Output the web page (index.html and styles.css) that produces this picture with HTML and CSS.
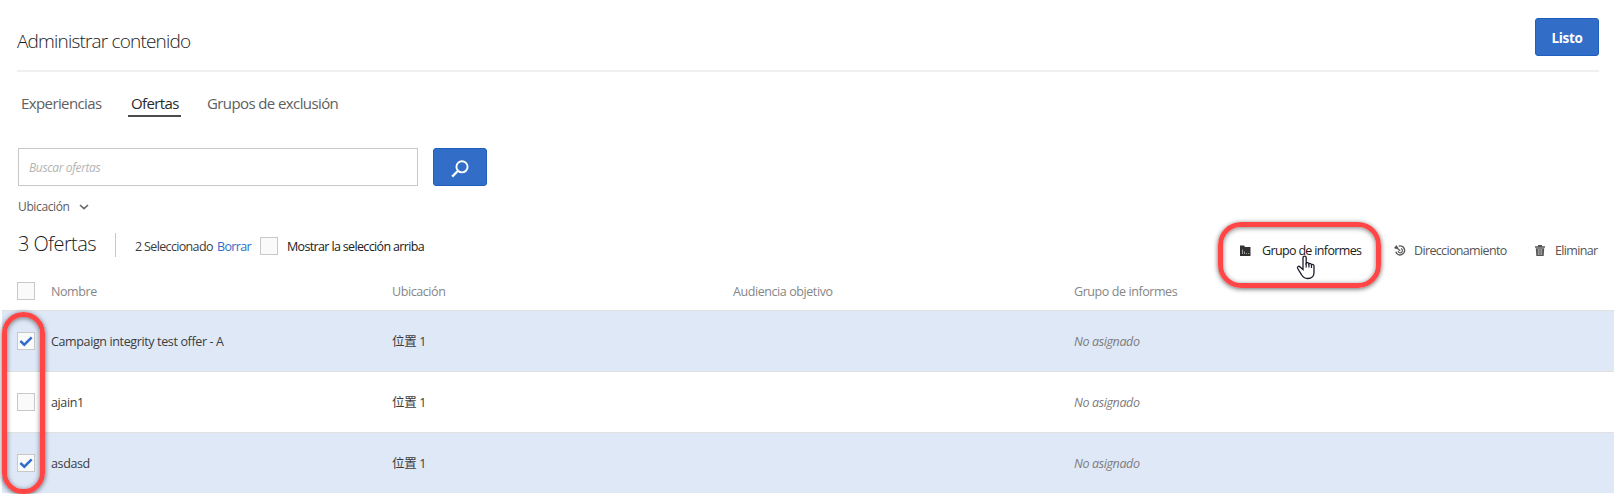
FILE: index.html
```html
<!DOCTYPE html>
<html lang="es">
<head>
<meta charset="utf-8">
<title>Administrar contenido</title>
<link rel="stylesheet" href="styles.css">
</head>
<body>
<header class="header">
  <h1 class="title">Administrar contenido</h1>
  <button class="btn done">Listo</button>
</header>
<nav class="tabs">
  <a class="tab t1">Experiencias</a>
  <a class="tab t2 active">Ofertas</a>
  <a class="tab t3">Grupos de exclusión</a>
</nav>
<div class="search">
  <div class="field"><span class="placeholder">Buscar ofertas</span></div>
  <button class="btn go" aria-label="Buscar">
    <svg width="18" height="18" viewBox="0 0 18 18" fill="none" stroke="#fff"><circle cx="11" cy="6.8" r="5.6" stroke-width="1.9"/><path d="M7 10.8 1.2 16.6" stroke-width="2.3"/></svg>
  </button>
</div>
<div class="filter"><span class="filter-name">Ubicación</span>
  <svg width="10" height="6" viewBox="0 0 10 6" fill="none" stroke="#666" stroke-width="1.6"><path d="M1 1l4 3.6L9 1"/></svg>
</div>
<div class="toolbar">
  <h2 class="count">3 Ofertas</h2>
  <span class="rule"></span>
  <span class="selected">2 Seleccionado</span>
  <a class="clear">Borrar</a>
  <span class="check"></span>
  <span class="ontop">Mostrar la selección arriba</span>
  <div class="actions">
    <div class="action report">
      <svg class="icon" width="11" height="11" viewBox="0 0 11 11"><path fill="#323232" d="M0 .5h4l1 1.500h5.500V11H0z"/><path d="M2.500 4.500v4.500M4.500 6.500V9M6 8.500h1M8 8.500h1" stroke="#aaa" stroke-width=".9"/></svg>
      <span class="label l1">Grupo de informes</span>
      <span class="callout callout-action"></span>
      <svg class="pointer" width="20" height="25" viewBox="0 0 20 25"><path d="M7 14.500V2.800C7 .6 10.200.6 10.200 2.800v5.400c.7-1 2.600-.7 2.700.7.8-.9 2.600-.4 2.600.8.9-.7 2.500-.2 2.500 1.200v6.600c0 4-2 6-6.400 6-3 0-4.800-1.400-6-3.700l-3.900-6.300c-1-1.900 1.200-3 2.500-1.500z" fill="#fff" stroke="#1c1c2c" stroke-width="1.300"/><path d="M10.200 8v4.500M12.900 9v3.500M15.500 10v3" fill="none" stroke="#1c1c2c" stroke-width="1.200"/></svg>
    </div>
    <div class="action route">
      <svg class="icon" width="12" height="11" viewBox="0 0 12 11" fill="none" stroke="#555"><path d="M4.800 1.100A4.500 4.500 0 1 1 1.800 6.800" stroke-width="1.400"/><path d="M7 3.600A2.200 2.200 0 1 1 4.100 6.200" stroke-width="1.100"/><path d="M1.500 2 6.300 5.800" stroke-width="1.200"/><path d="M0 3 2.600 0l.6 1.500 1.300 1L2 4z" fill="#555" stroke="none"/></svg>
      <span class="label l2">Direccionamiento</span>
    </div>
    <div class="action">
      <svg class="icon" width="10" height="11" viewBox="0 0 10 11" fill="#555"><path d="M0 1.200h3V0h4v1.200h3v1.500H0zM.8 3.200h8.400L8.700 11H1.300z"/><path d="M3.300 4v6M5 4v6M6.700 4v6" stroke="#fff" stroke-width=".5"/></svg>
      <span class="label l3">Eliminar</span>
    </div>
  </div>
</div>
<main class="table">
  <div class="row head"><span class="check"></span><span class="cell">Nombre</span><span class="cell">Ubicación</span><span class="cell">Audiencia objetivo</span><span class="cell">Grupo de informes</span></div>
  <div class="row on"><span class="check"><svg width="16" height="16" viewBox="0 0 16 16"><path d="m2.300 8 4 3.700L13.700 4.300"/></svg></span><span class="cell">Campaign integrity test offer - A</span><span class="cell">位置 1</span><span class="cell"></span><span class="cell none">No asignado</span></div>
  <div class="row"><span class="check"></span><span class="cell">ajain1</span><span class="cell">位置 1</span><span class="cell"></span><span class="cell none">No asignado</span></div>
  <div class="row on"><span class="check"><svg width="16" height="16" viewBox="0 0 16 16"><path d="m2.300 8 4 3.700L13.700 4.300"/></svg></span><span class="cell">asdasd</span><span class="cell">位置 1</span><span class="cell"></span><span class="cell none">No asignado</span></div>
  <span class="callout callout-checks"></span>
</main>
</body>
</html>
```
FILE: styles.css
```css
* { box-sizing: border-box; }
body { margin: 0; height: 494px; overflow: hidden; background: #fff; color: #3c3c3c; font: 12.5px/18px "Open Sans", "Noto Sans CJK SC", sans-serif; letter-spacing: -0.37px; white-space: nowrap; }
h1, h2 { margin: 0; font-weight: 300; color: #1c1c1c; }
.header { display: flex; justify-content: space-between; height: 72px; margin: 0 15px 0 17px; border-bottom: 2px solid #f0f0f0; }
.title { font-size: 19px; line-height: 26px; padding-top: 28px; letter-spacing: -0.82px; }
.btn { font: inherit; letter-spacing: inherit; padding: 0; border: 1px solid #1e5fbe; border-radius: 3px; background: #326ec8; color: #fff; display: flex; align-items: center; justify-content: center; }
.done { width: 64px; height: 38px; margin-top: 18px; font-size: 13.5px; font-weight: 700; padding-top: 2px; }
.tabs { display: flex; height: 76px; padding: 20px 0 0 18px; font-size: 15px; line-height: 23px; letter-spacing: -0.6px; color: #606060; }
.tab { height: 25px; padding: 0 3px; border-bottom: 2px solid transparent; }
.t1 { width: 88px; margin-right: 22px; }
.t2 { width: 53px; margin-right: 23px; }
.active { color: #2a2a2a; border-color: #4b4b4b; }
.search { display: flex; gap: 15px; padding-left: 18px; height: 38px; }
.field { width: 400px; border: 1px solid #c8c8c8; padding: 10px 10px; }
.placeholder { display: block; font-size: 12px; font-style: italic; color: #b4b4b4; }
.go { width: 54px; padding-top: 3px; }
.filter { display: flex; align-items: center; gap: 9px; height: 20px; margin-top: 11px; padding-left: 18px; font-size: 12px; color: #5c5c5c; }
.filter-name { width: 52px; }
.toolbar { display: flex; height: 62px; padding: 16px 15px 0 18px; }
.count { width: 97px; font-size: 20px; line-height: 22px; letter-spacing: -0.6px; }
.rule { width: 1px; height: 24px; background: #c8c8c8; }
.selected, .clear, .ontop { margin-top: 5px; letter-spacing: -0.65px; }
.selected { width: 82px; margin-left: 19px; }
.clear { width: 43px; color: #326ec8; }
.ontop { margin-left: 9px; color: #202020; }
.check { display: block; flex: none; width: 18px; height: 18px; border: 1px solid #c8c8c8; background: #fafafa; }
.check svg { display: block; }
.check path { fill: none; stroke: #326ec8; stroke-width: 2.500; }
.toolbar .check { margin-top: 4px; }
.actions { display: flex; margin-left: auto; padding-top: 9px; gap: 28px; color: #565656; letter-spacing: -0.65px; }
.action { display: flex; position: relative; }
.icon { margin-top: 3px; margin-right: 10px; }
.report .icon { margin-right: 11px; }
.route .icon { margin-right: 8px; }
.report { color: #202020; }
.l1 { width: 104px; }
.l2 { width: 93px; }
.l3 { width: 44px; }
.callout { position: absolute; border: 5px solid #ff4545; box-shadow: 0 1px 5px rgba(0,0,0,.6), inset 0 1px 5px rgba(0,0,0,.5); pointer-events: none; }
.callout-action { left: -22px; top: -20px; width: 163px; height: 66px; border-radius: 23px; }
.pointer { position: absolute; left: 56px; top: 13px; }
.table { position: relative; }
.row { display: grid; grid-template-columns: 18px 341px 341px 341px 1fr; align-items: start; margin-left: 2px; padding: 21px 0 0 15px; height: 61px; border-top: 1px solid #e1e1e1; }
.row.head { height: 31px; padding-top: 3px; border: 0; color: #868686; letter-spacing: -0.42px; }
.on { background: #dfe8f7; }
.cell { padding: 1px 0 0 16px; }
.none { font-style: italic; color: #7c7c7c; }
.callout-checks { left: 2px; top: 33px; width: 43px; height: 182px; border-radius: 22px; }
```
